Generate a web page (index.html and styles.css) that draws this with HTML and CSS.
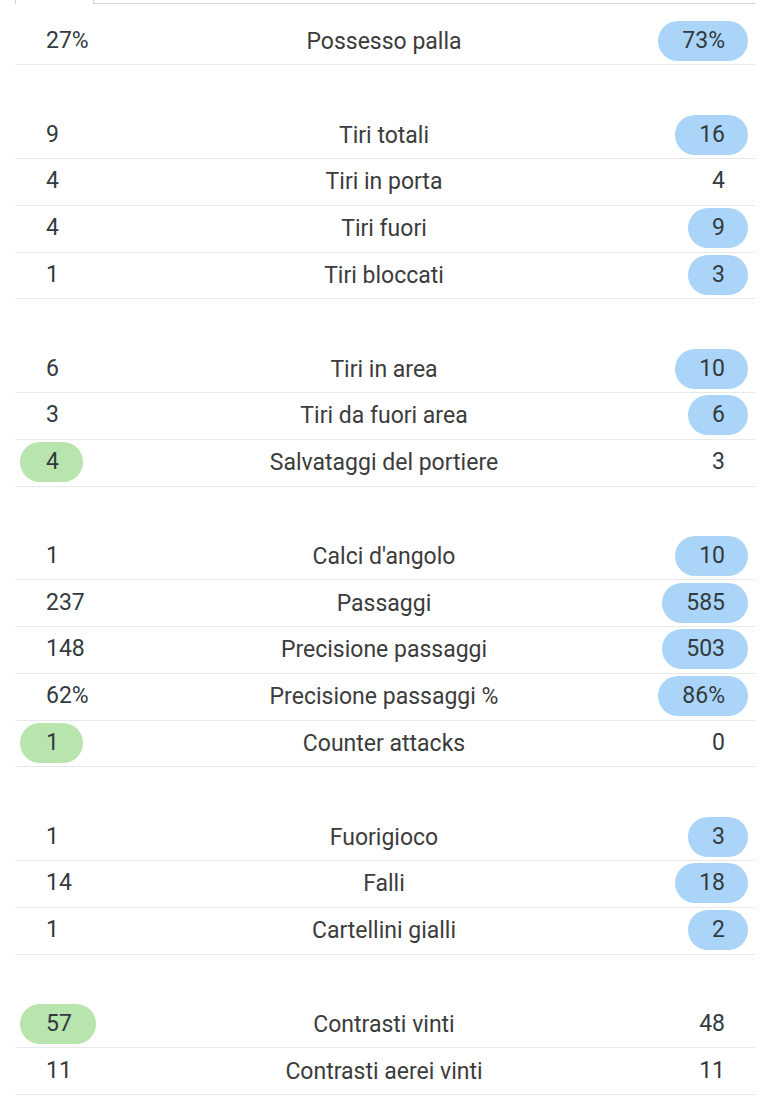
FILE: index.html
```html
<!DOCTYPE html>
<html lang="it">
<head>
<meta charset="utf-8">
<title>Statistiche</title>
<link rel="stylesheet" href="styles.css">
</head>
<body>
<div class="page">
  <div class="tabs">
    <div class="tab active"></div>
    <div class="tab-rest"></div>
  </div>

  <div class="group">
    <div class="row"><span class="val">27%</span><span class="label">Possesso palla</span><span class="val right blue">73%</span></div>
  </div>

  <div class="group">
    <div class="row"><span class="val">9</span><span class="label">Tiri totali</span><span class="val right blue">16</span></div>
    <div class="row"><span class="val">4</span><span class="label">Tiri in porta</span><span class="val right">4</span></div>
    <div class="row"><span class="val">4</span><span class="label">Tiri fuori</span><span class="val right blue">9</span></div>
    <div class="row"><span class="val">1</span><span class="label">Tiri bloccati</span><span class="val right blue">3</span></div>
  </div>

  <div class="group">
    <div class="row"><span class="val">6</span><span class="label">Tiri in area</span><span class="val right blue">10</span></div>
    <div class="row"><span class="val">3</span><span class="label">Tiri da fuori area</span><span class="val right blue">6</span></div>
    <div class="row"><span class="val green">4</span><span class="label">Salvataggi del portiere</span><span class="val right">3</span></div>
  </div>

  <div class="group">
    <div class="row"><span class="val">1</span><span class="label">Calci d'angolo</span><span class="val right blue">10</span></div>
    <div class="row"><span class="val">237</span><span class="label">Passaggi</span><span class="val right blue">585</span></div>
    <div class="row"><span class="val">148</span><span class="label">Precisione passaggi</span><span class="val right blue">503</span></div>
    <div class="row"><span class="val">62%</span><span class="label">Precisione passaggi %</span><span class="val right blue">86%</span></div>
    <div class="row"><span class="val green">1</span><span class="label">Counter attacks</span><span class="val right">0</span></div>
  </div>

  <div class="group">
    <div class="row"><span class="val">1</span><span class="label">Fuorigioco</span><span class="val right blue">3</span></div>
    <div class="row"><span class="val">14</span><span class="label">Falli</span><span class="val right blue">18</span></div>
    <div class="row"><span class="val">1</span><span class="label">Cartellini gialli</span><span class="val right blue">2</span></div>
  </div>

  <div class="group">
    <div class="row"><span class="val green">57</span><span class="label">Contrasti vinti</span><span class="val right">48</span></div>
    <div class="row"><span class="val">11</span><span class="label">Contrasti aerei vinti</span><span class="val right">11</span></div>
  </div>
</div>
</body>
</html>
```

FILE: styles.css
```css
html, body {
  margin: 0;
  padding: 0;
  background: #ffffff;
}

body {
  font-family: Roboto, "Liberation Sans", Arial, sans-serif;
  color: #3a3a3a;
}

.page {
  width: 740px;
  margin-left: 15px;
}

.tabs {
  display: flex;
  height: 4px;
  margin-bottom: 14.6px;
}

.tab.active {
  width: 77px;
  border-left: 1px solid #d6d6d6;
  border-right: 1px solid #d6d6d6;
  height: 4px;
}

.tab-rest {
  flex: 1;
  border-bottom: 1px solid #d6d6d6;
  height: 3px;
}

.group {
  display: flex;
  flex-direction: column;
  margin-bottom: 46.8px;
}

.row {
  display: grid;
  grid-template-columns: 1fr auto 1fr;
  align-items: center;
  height: 46.8px;
  box-sizing: border-box;
  border-bottom: 1px solid #e6e8ea;
  padding: 0 7px 0 5px;
}

.label {
  font-size: 23px;
  color: #3c3c3c;
  text-align: center;
}

.val {
  justify-self: start;
  font-size: 23px;
  color: #333a40;
  padding: 0 24px 0 26px;
  height: 40px;
  line-height: 40px;
  border-radius: 20px;
  margin-top: -1px;
}

.val.right {
  justify-self: end;
  padding: 0 23px 0 24px;
}

.blue {
  background: #aad5f8;
}

.green {
  background: #b8e4ae;
}
```
